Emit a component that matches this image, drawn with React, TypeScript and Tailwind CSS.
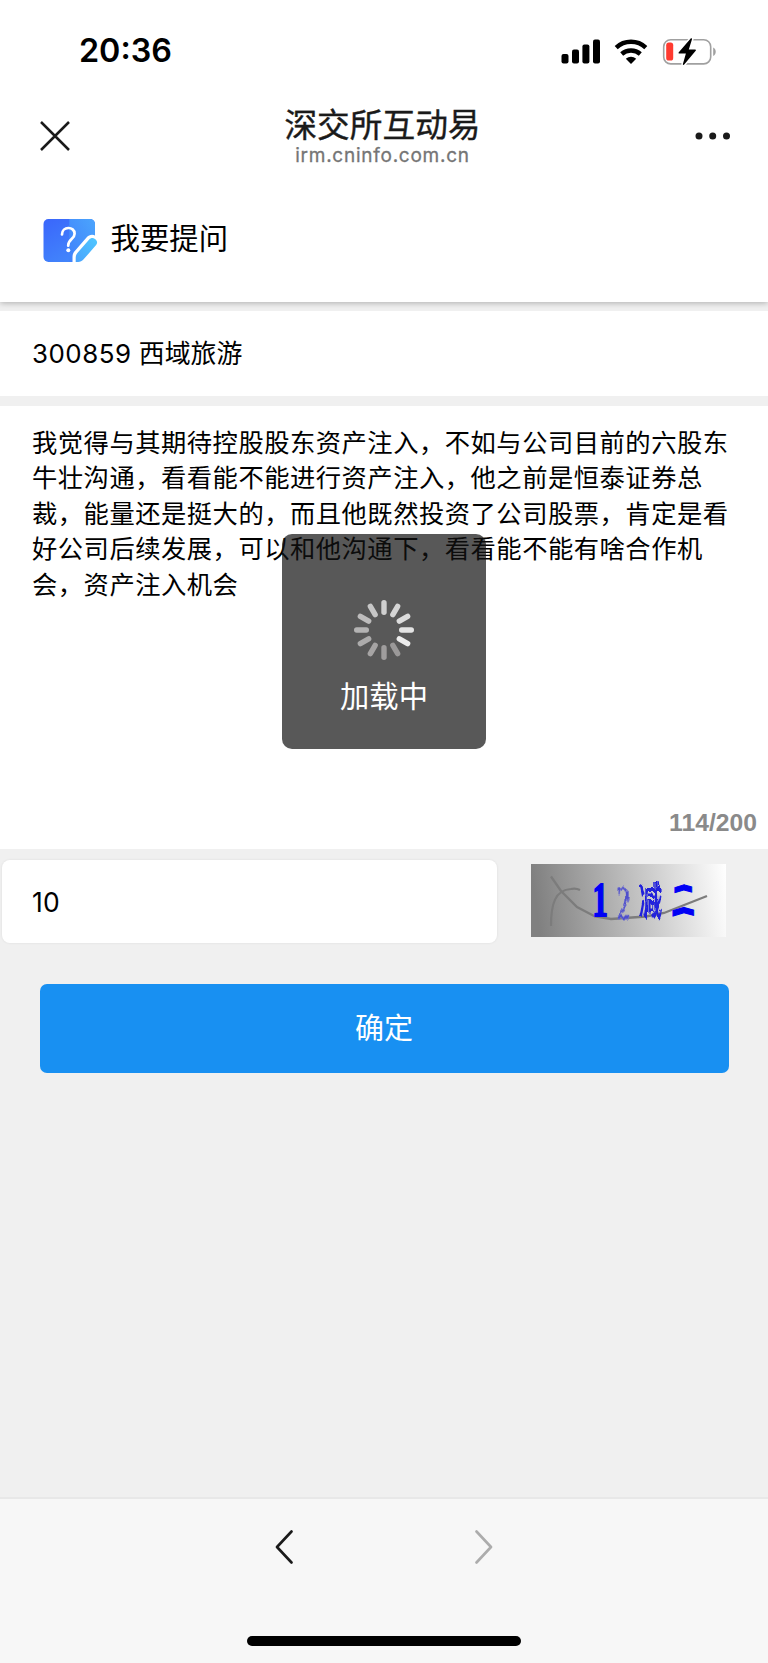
import React from "react";

const SANS = "font-['Inter','Noto_Sans_CJK_SC',sans-serif]";

function SignalIcon() {
  return (
    <svg width="40" height="26" viewBox="0 0 40 26" fill="#000">
      <rect x="0.500" y="15" width="7" height="9.500" rx="2" />
      <rect x="11" y="10.500" width="7" height="14" rx="2" />
      <rect x="21.400" y="5.500" width="7" height="19" rx="2" />
      <rect x="32" y="0.500" width="7" height="24" rx="2" />
    </svg>
  );
}

function WifiIcon() {
  return (
    <svg width="34" height="26" viewBox="0 0 34 26" fill="none" stroke="#000" strokeWidth="4.400">
      <path d="M2.200 8.600C10.400 0.800 23.600 0.800 31.800 8.600" />
      <path d="M7.700 15c5.200-4.700 13.400-4.700 18.600 0" />
      <path d="M11.800 19.800c3.100-2.900 7.300-2.900 10.400 0L17 25z" fill="#000" stroke="none" />
    </svg>
  );
}

function BatteryIcon() {
  return (
    <svg width="56" height="28" viewBox="0 0 56 28">
      <rect x="1.700" y="1.700" width="47" height="24.200" rx="7" fill="none" stroke="#a0a0a0" strokeWidth="1.600" />
      <path d="M51.200 9.500c3.400 1.400 3.400 7 0 8.400z" fill="#a0a0a0" />
      <rect x="4.200" y="4.600" width="7" height="18" rx="2.600" fill="#ff3b30" />
      <path
        d="M28.700 0.600 16.800 14.300c-.5.6-.2 1.200.5 1.200h6.600l-3 10.400c-.3 1.200.6 1.500 1.300.7l11.500-13.800c.5-.6.2-1.200-.5-1.200h-6.400l3.200-10.300c.2-1-.6-1.500-1.300-.7z"
        fill="#000"
        stroke="#fff"
        strokeWidth="3"
        paintOrder="stroke"
      />
    </svg>
  );
}

function AskIcon() {
  return (
    <svg width="55" height="44" viewBox="0 0 55 44">
      <defs>
        <linearGradient id="card" x1="0" y1="0" x2="0.700" y2="1">
          <stop offset="0" stopColor="#3a66fb" />
          <stop offset="1" stopColor="#4389fb" />
        </linearGradient>
        <linearGradient id="fold" x1="0" y1="1" x2="1" y2="0">
          <stop offset="0" stopColor="#4080fb" />
          <stop offset="1" stopColor="#4ba5fd" />
        </linearGradient>
        <linearGradient id="pen" x1="0" y1="1" x2="1" y2="0">
          <stop offset="0" stopColor="#4aa2fd" />
          <stop offset="1" stopColor="#4fc8ff" />
        </linearGradient>
      </defs>
      <rect x="0.500" y="0" width="51.500" height="43" rx="5" fill="url(#card)" />
      <path d="M26.300 0H47a5 5 0 0 1 5 5v33a5 5 0 0 1-5 5H26.300z" fill="url(#fold)" />
      <path d="M19 15.500c0-8.500 12.600-8.500 12.600-.8 0 5.600-6.400 5.200-6.400 12" fill="none" stroke="#fff" strokeWidth="2.700" strokeLinecap="round" />
      <circle cx="25.300" cy="31.300" r="2" fill="#fff" />
      <path d="M29.500 44v-6c0-2.400.8-4.200 2.300-5.900L43.500 18.600c2.500-2.900 6-3.600 9-1.800L55 18.500V44z" fill="#fff" />
      <path
        d="M32.700 43v-4.500c0-1.800.6-3.200 1.700-4.500L46.200 20.400c1.600-1.800 4-2 5.800-.5l.6.500c1.800 1.500 2 3.900.5 5.700L40.400 40.600C39 42.200 37.300 43 35.200 43z"
        fill="url(#pen)"
      />
    </svg>
  );
}

const SPOKES = [
  "#cfcfcf", "#d5d5d5", "#dcdcdc", "#e3e3e3", "#ececec", "#9b9999",
  "#9f9d9d", "#a6a4a4", "#acabab", "#b4b3b3", "#bdbcbc", "#c6c6c6",
];

function Spinner() {
  return (
    <svg width="60" height="60" viewBox="-30 -30 60 60">
      {SPOKES.map((color, i) => (
        <rect key={i} x="-2.700" y="-30" width="5.400" height="15" rx="2.700" fill={color} transform={`rotate(${i * 30})`} />
      ))}
    </svg>
  );
}

function Captcha() {
  return (
    <svg width="195" height="73" viewBox="0 0 195 73">
      <defs>
        <linearGradient id="shade" x1="0" y1="0.050" x2="1" y2="0">
          <stop offset="0" stopColor="#808080" />
          <stop offset="0.500" stopColor="#bfbfbf" />
          <stop offset="1" stopColor="#ffffff" />
        </linearGradient>
        <filter id="ripple" x="-20%" y="-20%" width="140%" height="140%">
          <feTurbulence type="fractalNoise" baseFrequency="0.200 0.080" numOctaves="1" seed="4" />
          <feDisplacementMap in="SourceGraphic" scale="8" xChannelSelector="R" yChannelSelector="G" />
          <feGaussianBlur stdDeviation="0.400" />
        </filter>
        <clipPath id="leftHalf"><rect x="130" y="0" width="23.300" height="73" /></clipPath>
        <clipPath id="rightHalf"><rect x="153" y="0" width="25" height="73" /></clipPath>
      </defs>
      <rect width="195" height="73" fill="url(#shade)" />
      <path d="M20 12.500 30 27 46 43 64 52.500 80 55 115 52.500 133 49 176 32" fill="none" stroke="#7c7c7c" strokeWidth="2.300" />
      <path d="M20 62c0-22 4-36 20-37 4-1 6-.5 9 1" fill="none" stroke="#7c7c7c" strokeWidth="2.200" />
      <g fill="#0000f5">
        <text transform="translate(61.500 52) scale(.68 1.080)" fontSize="45" fontWeight="700" stroke="#0000f5" strokeWidth="1.800" className="font-['Liberation_Serif',serif]">1</text>
        <text transform="translate(86 55) scale(.56 1)" fontSize="48" fill="#5050cc" stroke="#7070cc" strokeWidth="1" filter="url(#ripple)" className="font-['Liberation_Serif',serif]">2</text>
        <text transform="translate(108 51) scale(.6 1)" fontSize="39" fontWeight="700" fill="#2020dc" filter="url(#ripple)" className="font-['Noto_Sans_CJK_SC',sans-serif]">减</text>
        <g transform="translate(153 0) skewY(-17) translate(-153 0)">
          <g clipPath="url(#leftHalf)">
            <text id="two" transform="translate(140.500 48.500) scale(.65 1.080)" fontSize="36" fontWeight="700" stroke="#0000f5" strokeWidth="1" className="font-['Noto_Sans_CJK_SC',sans-serif]">二</text>
          </g>
        </g>
        <g transform="translate(153 0) skewY(15) translate(-153 0)">
          <g clipPath="url(#rightHalf)"><use href="#two" /></g>
        </g>
      </g>
    </svg>
  );
}

const QUESTION = [
  "我觉得与其期待控股股东资产注入，不如与公司目前的六股东",
  "牛壮沟通，看看能不能进行资产注入，他之前是恒泰证券总",
  "裁，能量还是挺大的，而且他既然投资了公司股票，肯定是看",
  "好公司后续发展，可以和他沟通下，看看能不能有啥合作机",
  "会，资产注入机会",
];

export default function App() {
  return (
    <div className={`relative flex h-[1663px] w-[768px] flex-col overflow-hidden bg-[#f0f0f0] text-black ${SANS}`}>
      <header className="relative z-10 flex h-[302px] shrink-0 flex-col bg-white shadow-[0_1px_6px_rgba(0,0,0,0.28)]">
        <div className="flex h-[102px] shrink-0 items-center justify-between pl-[79px] pr-[50px]">
          <span className="pt-px text-[32.300px] font-semibold leading-none">20:36</span>
          <div className="flex items-center pt-px">
            <SignalIcon />
            <div className="ml-[13px] flex"><WifiIcon /></div>
            <div className="ml-[14px] flex"><BatteryIcon /></div>
          </div>
        </div>
        <div className="flex h-[68px] shrink-0 items-center justify-between pl-[40px] pr-[37px]">
          <svg width="30" height="30" viewBox="0 0 30 30" stroke="#1a1a1a" strokeWidth="2.500">
            <path d="M1 1 29 29M29 1 1 29" />
          </svg>
          <div className="flex flex-col items-center pt-px">
            <h1 className="text-[32.700px] font-normal leading-[36px] text-[#1a1a1a] [-webkit-text-stroke:0.4px_#1a1a1a]">深交所互动易</h1>
            <p className="pt-[2px] text-[19px] leading-[22px] tracking-[0.750px] text-[#757575] [-webkit-text-stroke:0.3px_#757575]">irm.cninfo.com.cn</p>
          </div>
          <svg width="36" height="8" viewBox="0 0 36 8" fill="#1a1a1a">
            <circle cx="4" cy="4" r="3.500" />
            <circle cx="17.700" cy="4" r="3.500" />
            <circle cx="31.500" cy="4" r="3.500" />
          </svg>
        </div>
        <div className="flex h-[132px] shrink-0 items-center pl-[43px] pt-[10px]">
          <AskIcon />
          <span className="ml-[12.500px] pb-[5px] text-[29.400px] leading-none">我要提问</span>
        </div>
      </header>

      <div className="mt-[9px] flex h-[85px] shrink-0 items-center bg-white pl-[32px]">
        <span className="text-[25.900px] leading-none"><span className="tracking-[0.500px]">300859</span> 西域旅游</span>
      </div>

      <section className="mt-[10px] flex h-[443px] shrink-0 flex-col justify-between bg-white">
        <p className="whitespace-nowrap pl-[32px] pt-[18.500px] text-[25.300px] leading-[35.500px] tracking-[0.500px]">
          {QUESTION.map((line) => (
            <span key={line} className="block">{line}</span>
          ))}
        </p>
        <span className="self-end pb-[12px] pr-[11px] font-['Liberation_Sans',sans-serif] text-[24.700px] font-bold leading-[28px] text-[#8a8a8a]">114/200</span>
      </section>

      <div className="flex shrink-0 items-start pt-[11px]">
        <div className="ml-[2px] flex h-[83px] w-[495px] items-center rounded-[8px] bg-white pl-[30px] pt-[2px] shadow-[0_0_2px_1px_rgba(0,0,0,0.040)]">
          <span className="text-[26.500px] leading-none tracking-[0.300px]">10</span>
        </div>
        <div className="ml-[34px] mt-[4px] flex"><Captcha /></div>
      </div>

      <button className="ml-[39.500px] mt-[41px] flex h-[89px] w-[689px] shrink-0 items-center justify-center rounded-[7px] bg-[#1890f2] text-[29px] leading-none text-white">
        确定
      </button>

      <footer className="mt-auto flex h-[166px] shrink-0 flex-col items-center border-t-2 border-[#e8e8e8] bg-[#f7f7f7]">
        <div className="flex h-[96px] w-[218px] items-center justify-between">
          <svg width="18" height="34" viewBox="0 0 18 34" fill="none" stroke="#1a1a1a" strokeWidth="2.600" strokeLinecap="round" strokeLinejoin="round">
            <path d="M16.500 1.500 2 17 16.500 32.500" />
          </svg>
          <svg width="18" height="34" viewBox="0 0 18 34" fill="none" stroke="#acacac" strokeWidth="2.600" strokeLinecap="round" strokeLinejoin="round">
            <path d="M1.500 1.500 16 17 1.500 32.500" />
          </svg>
        </div>
        <div className="mt-[41px] h-[10px] w-[274px] rounded-full bg-black" />
      </footer>

      <div className="absolute left-[282px] top-[534px] z-20 flex h-[215px] w-[204px] flex-col items-center rounded-[10px] bg-[#111]/70 pt-[66px]">
        <Spinner />
        <span className="mt-[22px] text-[29.300px] leading-none text-white">加载中</span>
      </div>
    </div>
  );
}
